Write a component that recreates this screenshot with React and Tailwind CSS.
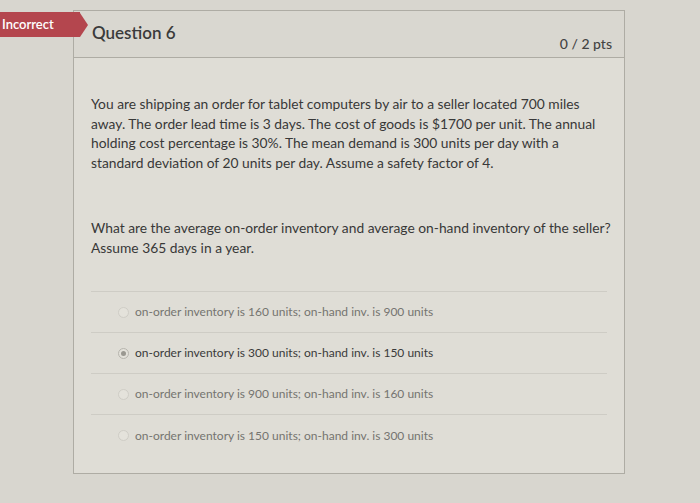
import React from "react";

const answers = [
  { t: "on-order inventory is 160 units; on-hand inv. is 900 units", sel: false },
  { t: "on-order inventory is 300 units; on-hand inv. is 150 units", sel: true },
  { t: "on-order inventory is 900 units; on-hand inv. is 160 units", sel: false },
  { t: "on-order inventory is 150 units; on-hand inv. is 300 units", sel: false },
];

export default function App() {
  return (
    <div
      className="w-[700px] h-[503px] overflow-hidden bg-[#d8d6cf] relative"
      style={{ fontFamily: "Lato, 'Open Sans', sans-serif" }}
    >
      <div className="absolute left-0 top-[12px] h-[25px] flex items-center z-10">
        <div className="h-[25px] w-[80px] bg-[#b4464e] flex items-center pl-[2px] text-white text-[13px] font-semibold">
          Incorrect
        </div>
        <div className="w-0 h-0 border-t-[12.5px] border-b-[12.5px] border-l-[8px] border-t-transparent border-b-transparent border-l-[#b4464e]" />
      </div>
      <div className="ml-[73px] mt-[10px] w-[552px] h-[464px] border border-[#aeaca4] bg-[#dfddd6] flex flex-col">
        <div className="h-[47px] border-b border-[#aeaca4] bg-[#d9d7d0] flex items-center justify-between pl-[18px] pr-[12px]">
          <div className="text-[17px] text-[#3b3b3b] font-semibold -mt-[2px]">Question 6</div>
          <div className="text-[14px] text-[#444] font-medium mt-[18px]">0 / 2 pts</div>
        </div>
        <div className="px-[17px] pt-[36px] text-[13.8px] leading-[19.5px] text-[#383838] whitespace-nowrap">
          <p>
            You are shipping an order for tablet computers by air to a seller located 700 miles
            <br />
            away. The order lead time is 3 days. The cost of goods is $1700 per unit. The annual
            <br />
            holding cost percentage is 30%. The mean demand is 300 units per day with a
            <br />
            standard deviation of 20 units per day. Assume a safety factor of 4.
          </p>
          <p className="mt-[46px]">
            What are the average on-order inventory and average on-hand inventory of the seller?
            <br />
            Assume 365 days in a year.
          </p>
        </div>
        <div className="mt-[34px] mx-[17px] border-t border-[#ceccc5]">
          {answers.map((a, i) => (
            <div
              key={i}
              className={`h-[41px] flex items-center pl-[27px] ${i < 3 ? "border-b border-[#ceccc5]" : ""}`}
            >
              <div
                className={`w-[11px] h-[11px] rounded-full border ${a.sel ? "border-[#b7b5ae] bg-[#e3e1da] flex items-center justify-center" : "border-[#cfcdc6] bg-[#e4e2db]"}`}
              >
                {a.sel && <div className="w-[5px] h-[5px] rounded-full bg-[#9a9891]" />}
              </div>
              <div
                className={`ml-[6px] text-[12px] ${a.sel ? "text-[#3a3a3a]" : "text-[#757470]"}`}
              >
                {a.t}
              </div>
            </div>
          ))}
        </div>
      </div>
    </div>
  );
}
